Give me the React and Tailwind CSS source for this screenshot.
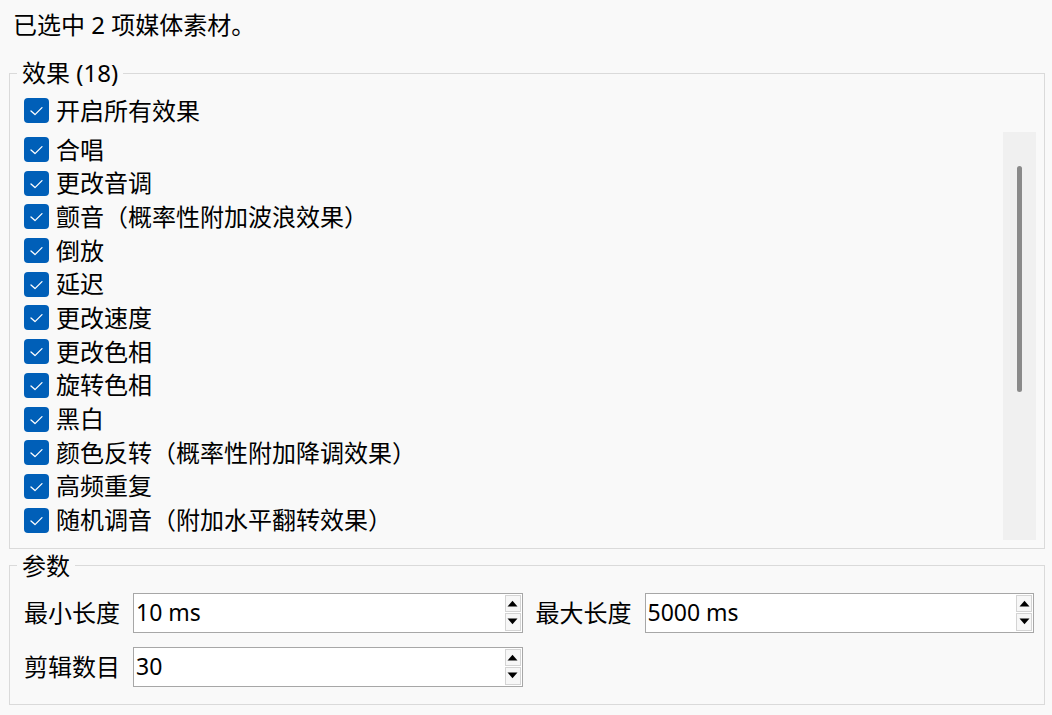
const effects = [
  "合唱",
  "更改音调",
  "颤音（概率性附加波浪效果）",
  "倒放",
  "延迟",
  "更改速度",
  "更改色相",
  "旋转色相",
  "黑白",
  "颜色反转（概率性附加降调效果）",
  "高频重复",
  "随机调音（附加水平翻转效果）",
];

function Check() {
  return (
    <span className="flex h-[25px] w-[25px] shrink-0 items-center justify-center rounded-[4px] bg-[#005fb8]">
      <svg width="25" height="25" viewBox="0 0 25 25" fill="none">
        <path d="M7 13l4 3.6L18 9.6" stroke="white" strokeWidth="1.3" strokeLinecap="round" strokeLinejoin="round" />
      </svg>
    </span>
  );
}

function CheckRow({ label }) {
  return (
    <div className="flex h-[33.7px] items-center gap-[7px]">
      <Check />
      <span className="whitespace-nowrap">{label}</span>
    </div>
  );
}

function Arrow({ up }) {
  return (
    <span className="flex flex-1 items-center justify-center border border-[#d4d4d4] bg-[#f7f7f7]">
      <svg width="11" height="7" viewBox="0 0 11 7">
        {up ? <path d="M0.5 6.5L5.5 0.8L10.5 6.5Z" fill="black" /> : <path d="M0.5 0.5L5.5 6.2L10.5 0.5Z" fill="black" />}
      </svg>
    </span>
  );
}

function SpinBox({ value }) {
  return (
    <div className="flex h-[40px] border border-[#a7a7a7] bg-white">
      <span className="flex-1 pl-[2px] text-[23px] leading-[36px]">{value}</span>
      <div className="mr-[1px] flex w-[16px] flex-col gap-[1px] py-[1px]">
        <Arrow up />
        <Arrow />
      </div>
    </div>
  );
}

function Group({ title, className = "", children }) {
  return (
    <fieldset className={`ml-[9px] w-[1036px] border border-[#dadada] pl-[14px] ${className}`}>
      <legend className="-ml-[7px] px-[5px] leading-[34px]">{title}</legend>
      {children}
    </fieldset>
  );
}

export default function App() {
  return (
    <div className="h-[715px] w-[1052px] overflow-hidden bg-[#f9f9f9] font-['Noto_Sans','Noto_Sans_CJK_SC',sans-serif] text-[24px] text-black">
      <p className="pb-[14px] pl-[13px] pt-[8px] leading-[34px]">已选中 2 项媒体素材。</p>

      <Group title="效果 (18)" className="pb-[8px] pr-[8px]">
        <div className="mt-[4px]">
          <CheckRow label="开启所有效果" />
        </div>
        <div className="mt-[4px] flex h-[408px]">
          <div className="flex-1 overflow-hidden pt-[1px]">
            {effects.map((name) => (
              <CheckRow key={name} label={name} />
            ))}
          </div>
          <div className="flex w-[33px] flex-col items-center bg-[#f0f0f0] pt-[34px]">
            <div className="h-[226px] w-[5px] rounded-full bg-[#8a8a8a]" />
          </div>
        </div>
      </Group>

      <Group title="参数" className="pb-[17px] pr-[10px]">
        <div className="mt-[10px] grid grid-cols-[auto_1fr_auto_1fr] items-center gap-x-[13px] gap-y-[14px]">
          <span>最小长度</span>
          <SpinBox value="10 ms" />
          <span>最大长度</span>
          <SpinBox value="5000 ms" />
          <span>剪辑数目</span>
          <SpinBox value="30" />
        </div>
      </Group>
    </div>
  );
}
